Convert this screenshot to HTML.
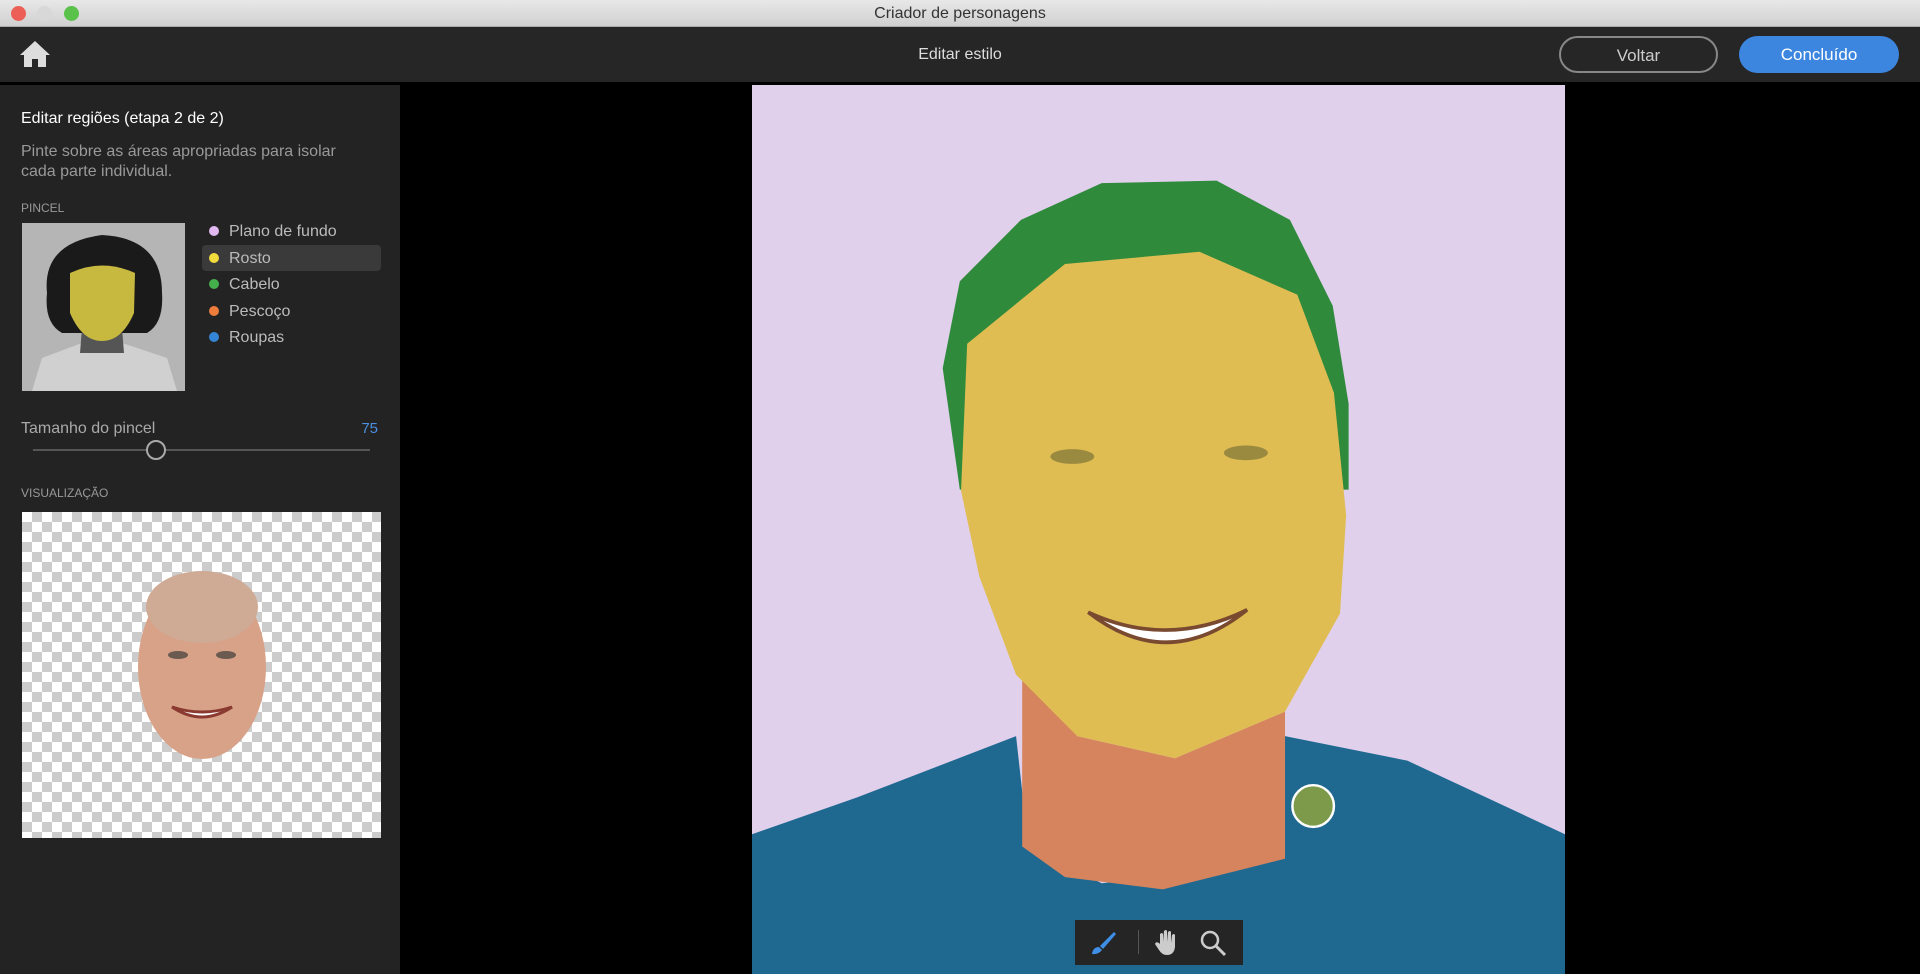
<!DOCTYPE html>
<html><head><meta charset="utf-8"><style>
*{margin:0;padding:0;box-sizing:border-box}
body{width:1920px;height:974px;background:#000;font-family:"Liberation Sans",sans-serif;position:relative;overflow:hidden}
.abs{position:absolute}
#tb{left:0;top:0;width:1920px;height:27px;background:linear-gradient(#e8e8e8,#d0d0d0);border-bottom:1px solid #aaa}
#tb .t{width:100%;text-align:center;font-size:16px;color:#333;line-height:27px}
.dot{width:15px;height:15px;border-radius:50%;top:6px}
#hd{left:0;top:27px;width:1920px;height:55px;background:#262626}
.btn{height:37px;top:36px;border-radius:19px;font-size:17px;text-align:center;line-height:35px}
#lp{left:0;top:85px;width:400px;height:889px;background:#232323}
.li{left:229px;color:#bbb;font-size:16px}
.ld{left:209px;width:10px;height:10px;border-radius:50%}
.chk{background-color:#fff;background-image:repeating-conic-gradient(#ccc 0 25%,#fff 0 50%);background-size:20px 20px}
</style></head><body>
<div id="tb" class="abs"><div class="t">Criador de personagens</div></div>
<div class="abs dot" style="left:11px;background:#ec5f57"></div>
<div class="abs dot" style="left:37px;background:#d8d8d8"></div>
<div class="abs dot" style="left:64px;background:#5ac24b"></div>
<div id="hd" class="abs"></div>
<svg class="abs" style="left:19px;top:40px" width="32" height="28" viewBox="0 0 32 28"><path d="M16 1 L1 15 L5 15 L5 27 L13 27 L13 19 L19 19 L19 27 L27 27 L27 15 L31 15 Z" fill="#ddd"/></svg>
<div class="abs" style="left:0;top:46px;width:1920px;text-align:center;color:#ddd;font-size:16px">Editar estilo</div>
<div class="abs btn" style="left:1559px;width:159px;border:2px solid #888;color:#ccc">Voltar</div>
<div class="abs btn" style="left:1739px;width:160px;background:#3c86e0;color:#fff;line-height:37px">Concluído</div>
<div id="lp" class="abs"></div>
<div class="abs" style="left:21px;top:110px;color:#fff;font-size:16px">Editar regiões (etapa 2 de 2)</div>
<div class="abs" style="left:21px;top:142px;color:#999;font-size:16px;line-height:20px">Pinte sobre as áreas apropriadas para isolar<br>cada parte individual.</div>
<div class="abs" style="left:21px;top:201px;color:#999;font-size:12px">PINCEL</div>
<svg class="abs" style="left:22px;top:223px" width="163" height="168" viewBox="0 0 163 168">
<rect width="163" height="168" fill="#b5b5b5"/>
<path d="M10 168 L20 135 L60 120 L100 120 L145 135 L155 168 Z" fill="#d0d0d0"/>
<path d="M60 105 L100 105 L102 130 L58 130 Z" fill="#555"/>
<path d="M25 70 Q20 20 80 12 Q140 15 140 70 Q142 100 125 110 L40 110 Q22 100 25 70Z" fill="#1a1a1a"/>
<path d="M48 50 Q80 35 113 50 L112 90 Q100 118 80 118 Q60 118 48 90 Z" fill="#c7b83f"/>
</svg>
<div class="abs" style="left:202px;top:245px;width:179px;height:26px;background:#3a3a3a;border-radius:4px"></div>
<div class="abs ld" style="top:226px;background:#e1b8f0"></div><div class="abs li" style="top:223px">Plano de fundo</div>
<div class="abs ld" style="top:253px;background:#f2db3c"></div><div class="abs li" style="top:250px">Rosto</div>
<div class="abs ld" style="top:279px;background:#44b04c"></div><div class="abs li" style="top:276px">Cabelo</div>
<div class="abs ld" style="top:306px;background:#ee7d3c"></div><div class="abs li" style="top:303px">Pescoço</div>
<div class="abs ld" style="top:332px;background:#3485d5"></div><div class="abs li" style="top:329px">Roupas</div>
<div class="abs" style="left:21px;top:420px;color:#aaa;font-size:16px">Tamanho do pincel</div>
<div class="abs" style="left:340px;top:420px;width:38px;text-align:right;color:#4a8fe0;font-size:15px">75</div>
<div class="abs" style="left:33px;top:449px;width:337px;height:2px;background:#555"></div>
<div class="abs" style="left:146px;top:440px;width:20px;height:20px;border-radius:50%;border:2px solid #aaa;background:#232323"></div>
<div class="abs" style="left:21px;top:486px;color:#999;font-size:12px">VISUALIZAÇÃO</div>
<div class="abs chk" style="left:22px;top:512px;width:359px;height:326px"></div>
<svg class="abs" style="left:22px;top:512px" width="359" height="326" viewBox="0 0 359 326">
<ellipse cx="180" cy="155" rx="64" ry="92" fill="#d8a288"/>
<ellipse cx="180" cy="95" rx="56" ry="36" fill="#cfaa95"/>
<ellipse cx="156" cy="143" rx="10" ry="4" fill="#6a5a50"/><ellipse cx="204" cy="143" rx="10" ry="4" fill="#6a5a50"/>
<path d="M150 195 Q180 215 210 195 Q180 205 150 195Z" fill="#fff" stroke="#8a3a30" stroke-width="3"/>
</svg>
<svg class="abs" style="left:752px;top:85px" width="813" height="889" viewBox="0 0 665 725" preserveAspectRatio="none">
<rect width="665" height="725" fill="#e0d0ec"/>
<path d="M0 611 L86 581 L216 531 L226 621 L286 651 L386 641 L436 531 L536 551 L665 611 L665 725 L0 725Z" fill="#1f6890"/>
<path d="M221 481 L266 531 L346 549 L436 511 L436 631 L336 656 L256 646 L221 621Z" fill="#d5845e"/>
<path d="M156 231 L170 160 L220 110 L286 80 L380 78 L440 110 L475 180 L488 260 L488 330 L170 330Z" fill="#2f8a3c"/>
<path d="M176 211 L256 146 L366 136 L446 171 L476 251 L486 351 L481 431 L436 511 L346 549 L266 531 L216 481 L186 401 L171 331Z" fill="#e0bd52"/>
<ellipse cx="262" cy="303" rx="18" ry="6" fill="#9a8a40"/><ellipse cx="404" cy="300" rx="18" ry="6" fill="#9a8a40"/>
<path d="M275 430 Q340 460 405 428 Q340 480 275 430Z" fill="#fff" stroke="#7a4a30" stroke-width="3"/>
<circle cx="459" cy="588" r="17" fill="#7d9a4a" stroke="#fff" stroke-width="2"/>
</svg>
<div class="abs" style="left:1075px;top:920px;width:168px;height:45px;background:#252525"></div>
<svg class="abs" style="left:1088px;top:928px" width="30" height="30" viewBox="0 0 30 30"><path d="M26 4 L12 18 L15 21 L28 6 Z M11 19 Q5 19 4 26 Q10 27 14 22 Z" fill="#3f8fe8"/></svg>
<div class="abs" style="left:1138px;top:930px;width:1px;height:24px;background:#555"></div>
<svg class="abs" style="left:1153px;top:928px" width="28" height="30" viewBox="0 0 28 30"><path d="M7 16 L7 6 Q9 4 10 6 L10 14 L11 3 Q13 1 14 3 L14 14 L15 4 Q17 2 18 4 L18 15 L19 7 Q21 5 22 7 L22 19 Q21 27 14 27 Q9 27 6 22 L2 16 Q3 13 6 15Z" fill="#ccc"/></svg>
<svg class="abs" style="left:1199px;top:929px" width="28" height="28" viewBox="0 0 28 28"><circle cx="11" cy="11" r="8" fill="none" stroke="#ccc" stroke-width="2.5"/><path d="M17 17 L26 26" stroke="#ccc" stroke-width="3"/></svg>
</body></html>
